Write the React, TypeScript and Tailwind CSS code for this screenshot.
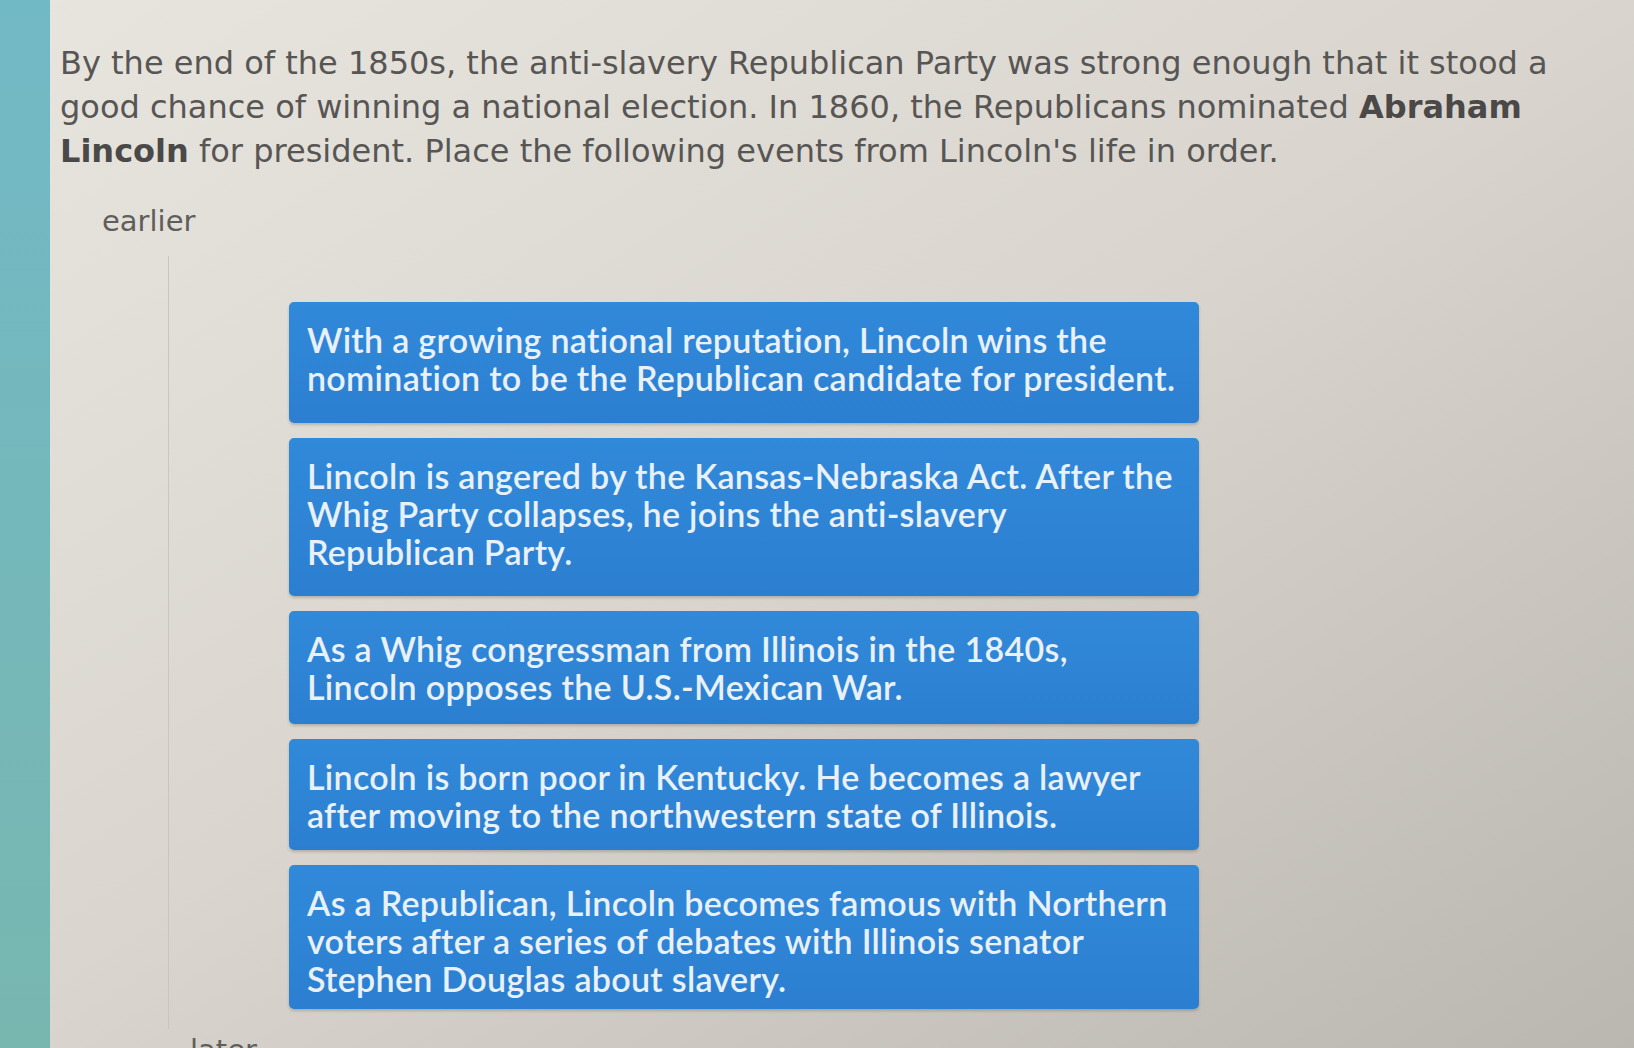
const events = [
  {
    id: 1,
    lines: [
      "With a growing national reputation, Lincoln wins the",
      "nomination to be the Republican candidate for president.",
    ],
    h: "h-[121px]",
  },
  {
    id: 2,
    lines: [
      "Lincoln is angered by the Kansas-Nebraska Act. After the",
      "Whig Party collapses, he joins the anti-slavery",
      "Republican Party.",
    ],
    h: "h-[158px]",
  },
  {
    id: 3,
    lines: [
      "As a Whig congressman from Illinois in the 1840s,",
      "Lincoln opposes the U.S.-Mexican War.",
    ],
    h: "h-[113px]",
  },
  {
    id: 4,
    lines: [
      "Lincoln is born poor in Kentucky. He becomes a lawyer",
      "after moving to the northwestern state of Illinois.",
    ],
    h: "h-[111px]",
  },
  {
    id: 5,
    lines: [
      "As a Republican, Lincoln becomes famous with Northern",
      "voters after a series of debates with Illinois senator",
      "Stephen Douglas about slavery.",
    ],
    h: "h-[144px]",
  },
];

function EventCard({ lines, h }: { lines: string[]; h: string }) {
  return (
    <div
      className={`${h} w-[910px] rounded-[5px] bg-gradient-to-b from-[#3189da] to-[#2c7fd0] px-[18px] pt-[19px] text-[34px] leading-[38px] font-semibold tracking-[0.3px] text-[#e8f0fa] shadow-[0_2px_3px_rgba(0,0,0,0.18)]`}
      style={{ fontFamily: "Lato, 'Open Sans', sans-serif" }}
    >
      {lines.map((l) => (
        <div key={l} className="whitespace-nowrap">
          {l}
        </div>
      ))}
    </div>
  );
}

export default function App() {
  return (
    <div className="flex h-[1048px] w-[1634px] overflow-hidden bg-gradient-to-br from-[#e8e5df] via-[#d9d5ce] to-[#bab7b0]">
      {/* side rail */}
      <div className="h-full w-[50px] shrink-0 bg-gradient-to-b from-[#72b9c6] to-[#78b7b0]" />

      <div
        className="flex flex-1 flex-col pl-[10px] pt-[41px] text-[#575654]"
        style={{ fontFamily: "'DejaVu Sans', Verdana, sans-serif" }}
      >
        <div className="text-[32px] leading-[44px]">
          <div className="whitespace-nowrap">
            By the end of the 1850s, the anti-slavery Republican Party was strong enough that it stood a
          </div>
          <div className="whitespace-nowrap">
            good chance of winning a national election. In 1860, the Republicans nominated{" "}
            <b className="font-bold text-[#4a4948]">Abraham</b>
          </div>
          <div className="whitespace-nowrap">
            <b className="font-bold text-[#4a4948]">Lincoln</b> for president. Place the following
            events from Lincoln's life in order.
          </div>
        </div>

        <div className="mt-[31px] pl-[42px] text-[29px] leading-[34px] text-[#5f5e5b]">earlier</div>

        {/* drop zone */}
        <div className="mt-[18px] ml-[108px] flex flex-col border-l border-[#c9c6bf] pl-[120px] pt-[46px] pb-[20px]">
          <div className="flex flex-col gap-[15px]">
            {events.map((e) => (
              <EventCard key={e.id} lines={e.lines} h={e.h} />
            ))}
          </div>
        </div>
        <div className="ml-[130px] mt-[4px] text-[29px] leading-[34px] text-[#5f5e5b]">later</div>
      </div>
    </div>
  );
}
